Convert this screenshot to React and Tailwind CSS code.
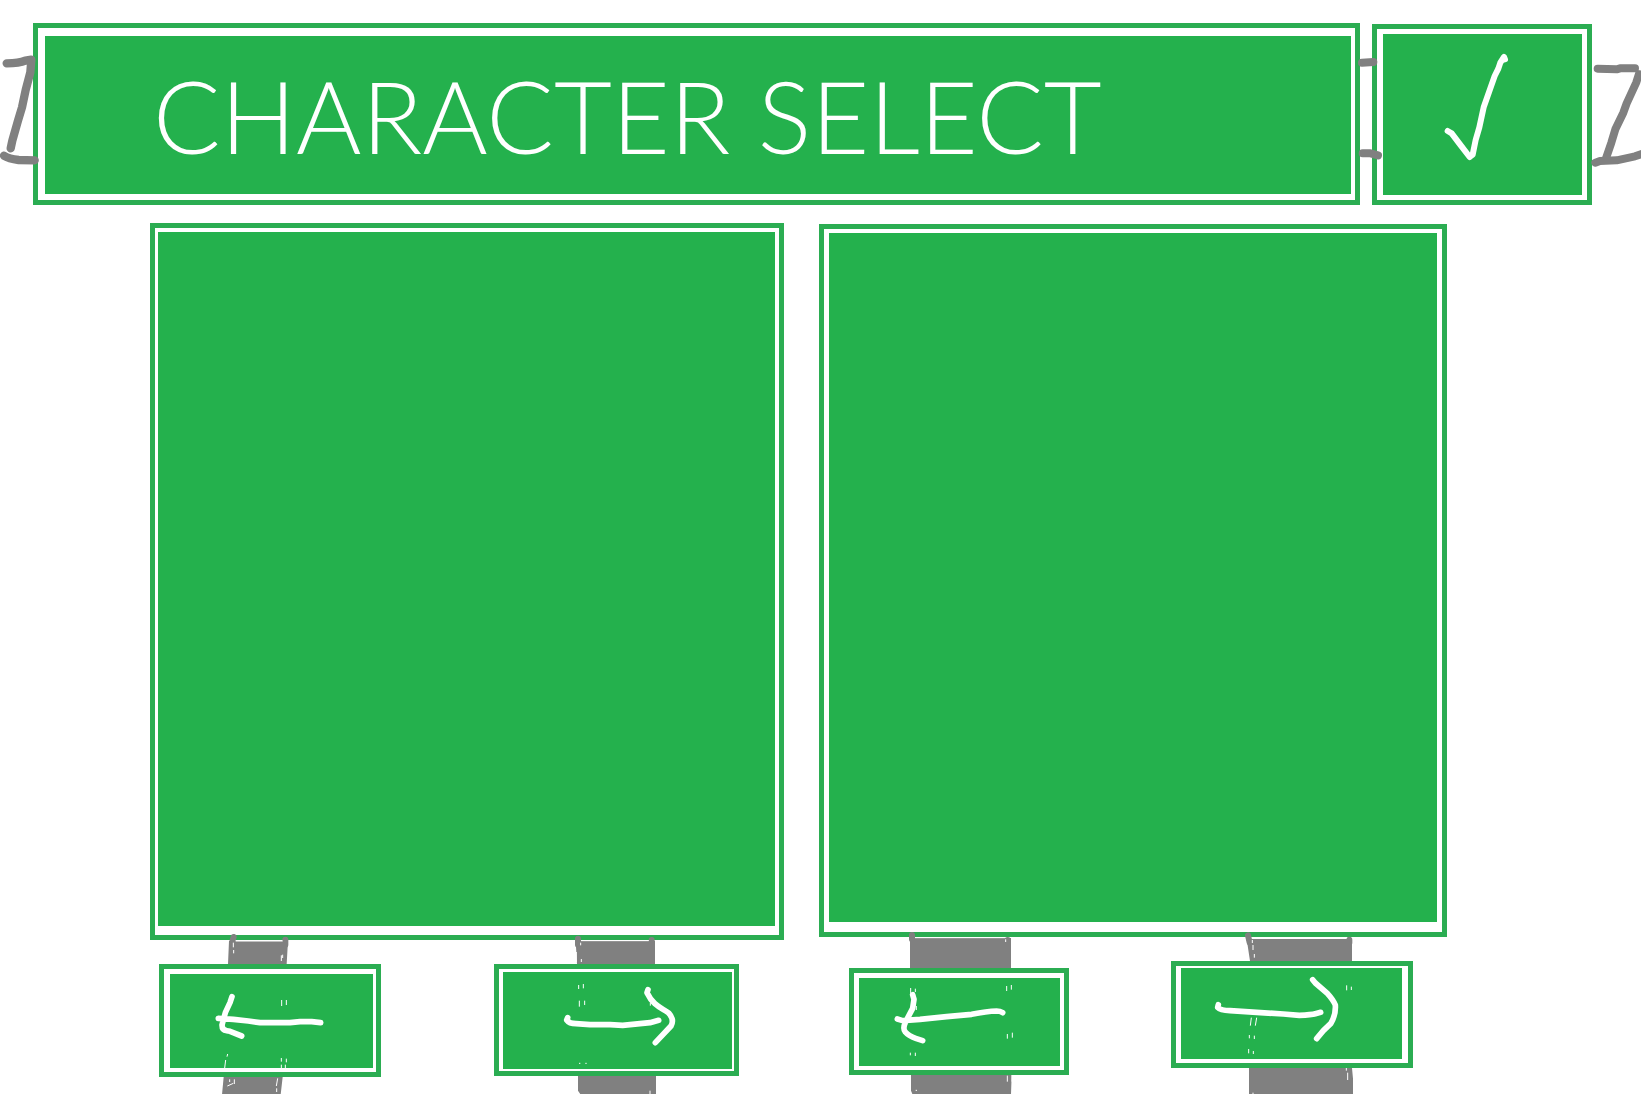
const GRAY = '#808080';

/* Double-outlined green plate: coloured border, white gap, filled centre. */
function Plate({ as: Tag = 'div', className = '', fill = '', children, ...rest }) {
  return (
    <Tag className={`flex border-[5px] border-[#2bad52] bg-white ${className}`} {...rest}>
      <span className={`flex flex-1 items-center bg-[#24b14d] ${fill}`}>{children}</span>
    </Tag>
  );
}

function Sketch({ viewBox, className = '', children }) {
  return (
    <svg
      aria-hidden="true"
      viewBox={viewBox}
      className={`pointer-events-none overflow-visible ${className}`}
      fill="none"
      strokeLinecap="round"
      strokeLinejoin="round"
    >
      {children}
    </svg>
  );
}

/* Arrow button standing in front of a gray post. */
function ArrowControl({ label, width, top, plate, viewBox, posts, arrow, specks, overlaps }) {
  return (
    <div className={`relative shrink-0 ${width} ${top}`}>
      <Plate as="button" type="button" aria-label={label} className={`w-full cursor-pointer ${plate}`} />
      <Sketch viewBox={viewBox} className="absolute inset-x-0 top-0 w-full">
        <path d={posts} fill={GRAY} />
        <path d={overlaps} stroke={GRAY} strokeWidth="18" />
        <path d={specks} stroke="#fff" strokeWidth="3" strokeLinecap="butt" />
        <path d={arrow} stroke="#fff" strokeWidth="17" />
      </Sketch>
    </div>
  );
}

export default function App() {
  return (
    <main className="flex min-h-screen flex-col overflow-hidden bg-white">
      <header className="flex items-start pt-[23px]">
        <Sketch viewBox="0 69 99 546" className="relative z-10 h-[182px] w-[33px] shrink-0">
          <path d="M20 190 C45 190 60 189 76 182 L94 179 M94 180 L91 217 L77 270 L66 322 L54 362 L37 422 L32 445" stroke={GRAY} strokeWidth="25" />
          <path d="M12 467 Q26 476 56 480 L104 481" stroke={GRAY} strokeWidth="25" />
        </Sketch>

        <Plate className="h-[182px] min-w-0 flex-1 pb-[6px] pl-[7px] pr-1 pt-2" fill="pl-[108px]">
          <h1 className="whitespace-nowrap font-['Lato',sans-serif] text-[100px] font-light leading-none text-white">
            CHARACTER SELECT
          </h1>
        </Plate>

        <Sketch viewBox="120 69 36 546" className="relative z-10 h-[182px] w-3 shrink-0">
          <path d="M126 188 L160 186 M128 460 L152 460 L174 466" stroke={GRAY} strokeWidth="24" />
        </Sketch>

        <Plate
          as="button"
          type="button"
          aria-label="Confirm"
          className="mt-px h-[181px] w-[220px] shrink-0 cursor-pointer py-[5px] pl-[6px] pr-[5px]"
        >
          <Sketch viewBox="189 102 597 483" className="size-full">
            <path d="M383 393 L395 400 L420 433 L449 471 L458 464 L467 420 L478 382 L491 322 L524 228 L535 206 L541 188 L552 171 L555 178" stroke="#fff" strokeWidth="18" />
          </Sketch>
        </Plate>

        <Sketch viewBox="816 69 147 546" className="h-[182px] w-[49px] shrink-0">
          <path d="M833 206 L890 208 L900 205 L945 205 M957 222 L949 247 L920 310 L910 338 L886 388 L874 428 L857 478" stroke={GRAY} strokeWidth="24" />
          <path d="M826 488 L840 483 L890 481 L945 469 L970 460" stroke={GRAY} strokeWidth="24" />
        </Sketch>
      </header>

      <div className="flex flex-1 gap-[35px] pl-[150px] pr-[194px] pt-[18px]">
        <section aria-label="Character one" className="flex min-w-0 flex-[634] flex-col">
          <Plate className="min-h-40 flex-1 pb-[9px] pl-[3px] pr-1 pt-1" />
          <div className="flex h-[154px] items-start justify-between pl-[9px] pr-[45px]">
            <ArrowControl
              label="Previous first character"
              width="w-[222px]"
              top="pt-6"
              plate="h-[113px] pb-1 pl-[6px] pr-[3px] pt-[5px]"
              viewBox="87 90 666 462"
              posts="M297 93 H474 L470 162 H294 Z M281 501 H458 L452 554 H276 Z"
              overlaps="M311 81 L306 98 M466 89 V104"
              specks="M317 93 H458 M310 98 V112 M311 120 V130 M454 136 V153 M458 134 V144 M455 270 V288 M469 270 V285 M293 432 L291 440 M287 450 L284 474 M454 444 V455 M469 446 V457 M454 464 V476 M466 464 V476 M299 508 V516 M313 508 V522 M292 528 L310 520 M443 505 L439 528 M440 535 V546"
              arrow="M306 260 L300 278 L286 308 L276 345 Q276 361 290 362 L300 364 L335 378 M265 325 L310 328 L355 333 L390 338 H480 L510 335 H545 L572 338"
            />
            <ArrowControl
              label="Next first character"
              width="w-[245px]"
              top="pt-6"
              plate="h-[112px] pb-[2px] pl-1 pr-[2px] pt-[3px]"
              viewBox="72 90 735 462"
              posts="M317 93 H555 V162 H321 Z M324 498 H558 V554 H332 L324 542 Z"
              overlaps="M324 86 V104 M545 90 V103"
              specks="M333 92 H536 M332 98 V106 M319 126 V156 M334 147 V156 M326 225 V237 M340 222 V235 M328 272 V290 M344 272 V285 M541 278 V287 M327 460 H331 M346 460 H350 M540 542 V552"
              arrow="M293 323 L290 330 Q298 341 318 341 L360 344 H420 L458 346 L510 341 L540 338 L566 331 M534 239 L531 248 C550 288 576 294 596 309 Q614 329 603 348 L556 398"
            />
          </div>
        </section>

        <section aria-label="Character two" className="flex min-w-0 flex-[628] flex-col pt-px">
          <Plate className="min-h-40 flex-1 pb-[10px] pl-[5px] pr-[5px] pt-1" />
          <div className="flex h-[157px] items-start justify-between pl-[30px] pr-[34px]">
            <ArrowControl
              label="Previous second character"
              width="w-[220px]"
              top="pt-[31px]"
              plate="h-[107px] pb-1 pl-[5px] pr-1 pt-[5px]"
              viewBox="147 81 660 471"
              posts="M330 84 H633 V174 H330 Z M333 495 H635 L633 554 H338 L333 542 Z"
              overlaps="M336 75 V88 M623 90 V98"
              specks="M345 83 H615 M617 88 V96 M332 234 V250 M346 236 V246 M349 288 V300 M620 228 V243 M634 225 V239 M622 372 V386 M637 368 V383 M331 428 V436 M346 428 V438 M622 497 V515 M636 495 V515 M347 541 H351"
              arrow="M338 254 L342 268 L338 295 L317 335 Q307 356 316 366 Q326 378 347 385 L368 392 M292 327 L308 332 L360 328 L440 320 L515 313 Q560 304 590 303 Q600 303 608 308"
            />
            <ArrowControl
              label="Next second character"
              width="w-[242px]"
              top="pt-6"
              plate="h-[107px] pb-1 pl-[5px] pr-[6px] pt-[2px]"
              viewBox="93 81 726 471"
              posts="M320 87 H636 V153 H330 Z M327 474 H636 L639 506 V554 H327 Z"
              overlaps="M324 76 L329 98 M628 89 V98"
              specks="M336 85 H619 M337 90 V99 M339 105 V120 M343 132 V143 M334 323 L331 347 M350 323 L346 347 M328 375 V385 M343 377 V387 M326 417 V430 M340 423 V432 M620 226 V241 M634 230 V240 M619 474 V482 M623 488 V510 M339 548 V554"
              arrow="M235 284 L233 292 Q241 301 270 302 L350 307 L430 312 L478 316 Q515 314 526 311 L542 307 M518 209 L526 219 L562 250 Q580 270 586 285 Q588 315 572 341 L550 362 L530 386"
            />
          </div>
        </section>
      </div>
    </main>
  );
}
